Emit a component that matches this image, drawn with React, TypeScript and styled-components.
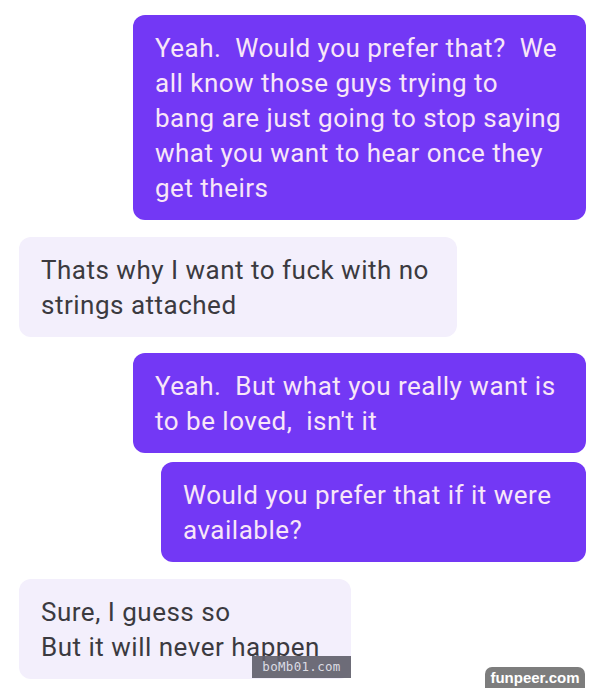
import * as React from 'react';
import styled, { createGlobalStyle } from 'styled-components';

const GlobalStyle = createGlobalStyle`
    html, body {
        margin: 0;
        padding: 0;
        background: #ffffff;
    }
    body {
        font-family: Roboto, "Noto Sans", sans-serif;
    }
`;

const Page = styled.div`
    position: relative;
    width: 605px;
    height: 688px;
    overflow: hidden;
    background: #ffffff;
`;

const Thread = styled.div`
    display: flex;
    flex-direction: column;
    padding: 15px 19px 0 19px;
`;

interface BubbleProps {
    readonly mine?: boolean;
    readonly width: number;
    readonly gap: number;
}

const Bubble = styled.div<BubbleProps>`
    position: relative;
    box-sizing: border-box;
    width: ${(p) => p.width}px;
    align-self: ${(p) => (p.mine ? 'flex-end' : 'flex-start')};
    margin-top: ${(p) => p.gap}px;
    padding: 16px 22px 14px 22px;
    border-radius: 12px;
    background: ${(p) => (p.mine ? '#7338f5' : '#f3effc')};
    color: ${(p) => (p.mine ? '#f8e6f8' : '#3b3a40')};
    font-size: 26px;
    line-height: 35px;
    letter-spacing: 0.5px;
`;

const Line = styled.div`
    white-space: pre;
`;

const BombTag = styled.div`
    position: absolute;
    right: 0;
    bottom: 1px;
    width: 99px;
    height: 22px;
    display: flex;
    align-items: center;
    justify-content: center;
    background: rgba(98, 97, 108, 0.92);
    color: #dcdce4;
    font-family: "DejaVu Sans Mono", "Liberation Mono", monospace;
    font-size: 12.5px;
    line-height: 1;
    letter-spacing: 0.3px;
`;

const FunpeerTag = styled.div`
    position: absolute;
    right: 20px;
    bottom: 0;
    width: 100px;
    height: 21px;
    display: flex;
    align-items: center;
    justify-content: center;
    background: #7d7d7d;
    border-radius: 7px 7px 0 0;
    color: #ffffff;
    font-family: "Liberation Sans", Arial, sans-serif;
    font-weight: bold;
    font-size: 15px;
`;

interface MessageData {
    readonly mine: boolean;
    readonly width: number;
    readonly gap: number;
    readonly lines: string[];
}

const messages: MessageData[] = [
    {
        mine: true,
        width: 453,
        gap: 0,
        lines: [
            'Yeah.  Would you prefer that?  We',
            'all know those guys trying to',
            'bang are just going to stop saying',
            'what you want to hear once they',
            'get theirs',
        ],
    },
    {
        mine: false,
        width: 438,
        gap: 17,
        lines: ['Thats why I want to fuck with no', 'strings attached'],
    },
    {
        mine: true,
        width: 453,
        gap: 16,
        lines: ['Yeah.  But what you really want is', "to be loved,  isn't it"],
    },
    {
        mine: true,
        width: 425,
        gap: 9,
        lines: ['Would you prefer that if it were', 'available?'],
    },
];

export default function App() {
    return (
        <Page>
            <GlobalStyle />
            <Thread>
                {messages.map((m, i) => (
                    <Bubble key={i} mine={m.mine} width={m.width} gap={m.gap}>
                        {m.lines.map((l, j) => (
                            <Line key={j}>{l}</Line>
                        ))}
                    </Bubble>
                ))}
                <Bubble width={332} gap={17}>
                    <Line>Sure, I guess so</Line>
                    <Line>But it will never happen</Line>
                    <BombTag>boMb01.com</BombTag>
                </Bubble>
            </Thread>
            <FunpeerTag>funpeer.com</FunpeerTag>
        </Page>
    );
}
